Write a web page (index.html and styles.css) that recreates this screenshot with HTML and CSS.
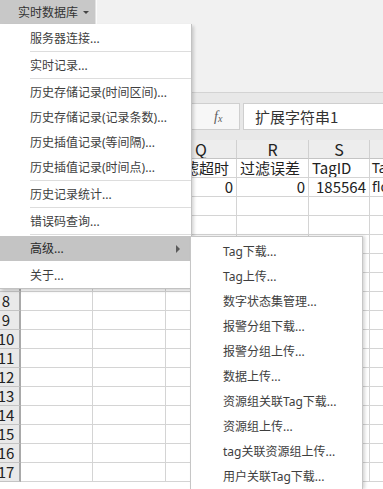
FILE: index.html
```html
<!DOCTYPE html>
<html lang="zh-CN">
<head>
<meta charset="utf-8">
<title>实时数据库</title>
<link rel="stylesheet" href="styles.css">
</head>
<body>
<div class="app">
  <div class="ribbon">
    <div class="tabs">
      <div class="tab active">实时数据库<span class="caret"></span></div>
      <div class="tab-sep"></div>
    </div>
  </div>
  <div class="formula-area">
    <div class="formula-bar">
      <div class="namebox"></div>
      <div class="fx"><span class="fx-f">f</span><span class="fx-x">x</span></div>
      <div class="input">扩展字符串1</div>
    </div>
  </div>
  <div class="sheet">
    <div class="row head">
      <div class="rh corner"></div><div class="c">O</div><div class="c">P</div><div class="c">Q</div><div class="c">R</div><div class="c">S</div><div class="c">T</div>
    </div>
    <div class="row"><div class="rh">1</div><div class="c"></div><div class="c"></div><div class="c">过滤超时</div><div class="c">过滤误差</div><div class="c">TagID</div><div class="c latin">TagType</div></div>
    <div class="row"><div class="rh">2</div><div class="c"></div><div class="c"></div><div class="c num">0</div><div class="c num">0</div><div class="c num">185564</div><div class="c latin">float</div></div>
    <div class="row"><div class="rh">3</div><div class="c"></div><div class="c"></div><div class="c"></div><div class="c"></div><div class="c"></div><div class="c"></div></div>
    <div class="row"><div class="rh">4</div><div class="c"></div><div class="c"></div><div class="c"></div><div class="c"></div><div class="c"></div><div class="c"></div></div>
    <div class="row"><div class="rh">5</div><div class="c"></div><div class="c"></div><div class="c"></div><div class="c"></div><div class="c"></div><div class="c"></div></div>
    <div class="row"><div class="rh">6</div><div class="c"></div><div class="c"></div><div class="c"></div><div class="c"></div><div class="c"></div><div class="c"></div></div>
    <div class="row"><div class="rh">7</div><div class="c"></div><div class="c"></div><div class="c"></div><div class="c"></div><div class="c"></div><div class="c"></div></div>
    <div class="row"><div class="rh">8</div><div class="c"></div><div class="c"></div><div class="c"></div><div class="c"></div><div class="c"></div><div class="c"></div></div>
    <div class="row"><div class="rh">9</div><div class="c"></div><div class="c"></div><div class="c"></div><div class="c"></div><div class="c"></div><div class="c"></div></div>
    <div class="row"><div class="rh">10</div><div class="c"></div><div class="c"></div><div class="c"></div><div class="c"></div><div class="c"></div><div class="c"></div></div>
    <div class="row"><div class="rh">11</div><div class="c"></div><div class="c"></div><div class="c"></div><div class="c"></div><div class="c"></div><div class="c"></div></div>
    <div class="row"><div class="rh">12</div><div class="c"></div><div class="c"></div><div class="c"></div><div class="c"></div><div class="c"></div><div class="c"></div></div>
    <div class="row"><div class="rh">13</div><div class="c"></div><div class="c"></div><div class="c"></div><div class="c"></div><div class="c"></div><div class="c"></div></div>
    <div class="row"><div class="rh">14</div><div class="c"></div><div class="c"></div><div class="c"></div><div class="c"></div><div class="c"></div><div class="c"></div></div>
    <div class="row"><div class="rh">15</div><div class="c"></div><div class="c"></div><div class="c"></div><div class="c"></div><div class="c"></div><div class="c"></div></div>
    <div class="row"><div class="rh">16</div><div class="c"></div><div class="c"></div><div class="c"></div><div class="c"></div><div class="c"></div><div class="c"></div></div>
    <div class="row"><div class="rh">17</div><div class="c"></div><div class="c"></div><div class="c"></div><div class="c"></div><div class="c"></div><div class="c"></div></div>
  </div>
</div>

<div class="menu main-menu">
  <div class="mi">服务器连接...</div>
  <div class="sep"></div>
  <div class="mi">实时记录...</div>
  <div class="sep"></div>
  <div class="mi">历史存储记录(时间区间)...</div>
  <div class="mi">历史存储记录(记录条数)...</div>
  <div class="mi">历史插值记录(等间隔)...</div>
  <div class="mi">历史插值记录(时间点)...</div>
  <div class="sep"></div>
  <div class="mi">历史记录统计...</div>
  <div class="sep"></div>
  <div class="mi">错误码查询...</div>
  <div class="sep"></div>
  <div class="mi hot">高级...<span class="arrow"></span></div>
  <div class="mi last">关于...</div>
</div>

<div class="menu sub-menu">
  <div class="mi">Tag下载...</div>
  <div class="mi">Tag上传...</div>
  <div class="mi">数字状态集管理...</div>
  <div class="mi">报警分组下载...</div>
  <div class="mi">报警分组上传...</div>
  <div class="mi">数据上传...</div>
  <div class="mi">资源组关联Tag下载...</div>
  <div class="mi">资源组上传...</div>
  <div class="mi">tag关联资源组上传...</div>
  <div class="mi">用户关联Tag下载...</div>
</div>
</body>
</html>
```

FILE: styles.css
```css
* { box-sizing: border-box; }

html, body {
  margin: 0;
  padding: 0;
}

body {
  width: 383px;
  height: 489px;
  overflow: hidden;
  background: #ffffff;
  font-family: "Noto Sans", "Noto Sans CJK SC", sans-serif;
  color: #333333;
  position: relative;
}

.app {
  display: flex;
  flex-direction: column;
  width: 383px;
  height: 489px;
  overflow: hidden;
}

/* ribbon */
.ribbon {
  flex: 0 0 93px;
  background: #f1f1f1;
  border-bottom: 1px solid #d3d3d3;
}

.tabs {
  display: flex;
  height: 24px;
}

.tab {
  width: 95px;
  height: 24px;
  padding-left: 18px;
  display: flex;
  align-items: center;
  font-size: 12px;
  color: #333;
}

.tab.active {
  background: #c8c8c8;
}

.caret {
  margin-left: 5px;
  width: 0;
  height: 0;
  border-left: 3px solid transparent;
  border-right: 3px solid transparent;
  border-top: 3px solid #444;
  margin-top: 1px;
}

.tab-sep {
  width: 2px;
  height: 24px;
  background: #fbfbfb;
  border-left: 1px solid #e2e2e2;
}

/* formula bar */
.formula-area {
  flex: 0 0 47px;
  background: #e8e8e8;
  padding: 10px 0 10px 0;
}

.formula-bar {
  display: flex;
  height: 27px;
  gap: 3px;
}

.namebox {
  flex: 0 0 175px;
  background: #fff;
  border: 1px solid #c9c9c9;
}

.fx {
  flex: 0 0 62px;
  background: #f7f7f7;
  border: 1px solid #cfcfcf;
  display: flex;
  align-items: center;
  padding-left: 35px;
  font-family: "Liberation Serif", serif;
  font-style: italic;
  color: #5e5e5e;
}

.fx-f { font-size: 14px; }
.fx-x { font-size: 10px; margin-top: 3px; }

.input {
  flex: 1;
  background: #fff;
  border: 1px solid #cfcfcf;
  border-right: none;
  font-family: "Noto Sans CJK SC", sans-serif;
  font-size: 15px;
  color: #333;
  padding-left: 11px;
  line-height: 25px;
}

/* sheet */
.sheet {
  display: flex;
  flex-direction: column;
  align-items: flex-start;
  font-family: "Noto Sans CJK SC", sans-serif;
  font-size: 15px;
  color: #222;
}

.row {
  display: grid;
  grid-template-columns: 21px 72px 73px 71px 72px 61px 72px;
  width: 442px;
  height: 19px;
  flex: 0 0 19px;
}

.row .c {
  border-right: 1px solid #d4d4d4;
  border-bottom: 1px solid #d4d4d4;
  line-height: 18px;
  padding: 0 3px;
  white-space: nowrap;
  overflow: hidden;
}

.row .c.num {
  text-align: right;
  padding-right: 3px;
}

.row .c.latin {
  font-family: "Noto Sans", "Noto Sans CJK SC", sans-serif;
  font-size: 14px;
  padding-left: 2px;
}

.row .rh {
  background: #e9e9e9;
  border-right: 2px solid #a9a9a9;
  border-bottom: 1px solid #c4c4c4;
  line-height: 18px;
  padding-right: 7px;
  white-space: nowrap;
  display: flex;
  justify-content: center;
  color: #222;
}

.row.head .c {
  background: #ededed;
  border-right: 1px solid #d0d0d0;
  border-bottom: 1px solid #c4c4c4;
  text-align: center;
  font-size: 16px;
  color: #222;
}

.row.head .rh {
  background: #e9e9e9;
}

/* menus */
.menu {
  position: absolute;
  background: #ffffff;
  font-size: 12px;
  color: #3e3e3e;
}

.main-menu {
  left: 0;
  top: 24px;
  width: 192px;
  height: 265px;
  padding-top: 2px;
  border-right: 1px solid #c2c2c2;
  border-bottom: 1px solid #c2c2c2;
  box-shadow: 2px 2px 3px rgba(0, 0, 0, 0.16);
}

.main-menu .mi {
  height: 25px;
  line-height: 25px;
  padding-left: 30px;
  position: relative;
  white-space: nowrap;
}

.main-menu .mi.hot {
  background: #c4c4c4;
  color: #2a2a2a;
}

.main-menu .mi.last {
  margin-top: 2px;
}

.arrow {
  position: absolute;
  right: 11px;
  top: 9px;
  width: 0;
  height: 0;
  border-top: 4px solid transparent;
  border-bottom: 4px solid transparent;
  border-left: 4px solid #5a5a5a;
}

.sep {
  height: 2px;
  margin-left: 30px;
  border-top: 1px solid #dddddd;
}

.sub-menu {
  left: 190px;
  top: 236px;
  width: 173px;
  height: 253px;
  padding-top: 2px;
  border: 1px solid #c6c6c6;
  border-bottom: none;
  box-shadow: 2px 0 3px rgba(0, 0, 0, 0.16);
}

.sub-menu .mi {
  height: 25px;
  line-height: 25px;
  padding-left: 32px;
  white-space: nowrap;
}
```
